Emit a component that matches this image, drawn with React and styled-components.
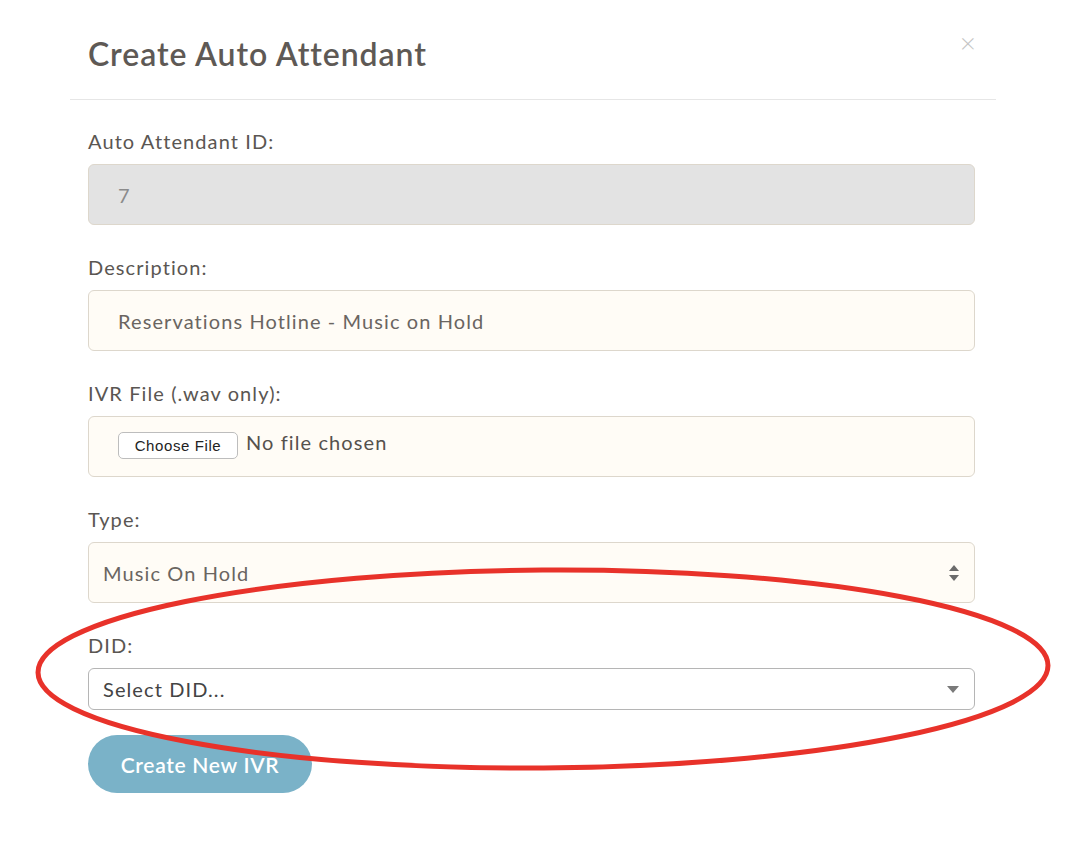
import React from "react";
import styled, { createGlobalStyle } from "styled-components";

const GlobalStyle = createGlobalStyle`
  html, body {
    margin: 0;
    padding: 0;
    background: #ffffff;
  }
  body {
    font-family: "Lato", "Open Sans", sans-serif;
  }
`;

const Page = styled.div`
  position: relative;
  width: 1080px;
  height: 862px;
  overflow: hidden;
  background: #fff;
`;

const Modal = styled.div`
  margin-left: 70px;
  width: 926px;
`;

const Header = styled.div`
  height: 100px;
  box-sizing: border-box;
  display: flex;
  align-items: center;
  justify-content: space-between;
  padding: 0 20px 0 18px;
  border-bottom: 1px solid #e6e6e6;
`;

const Title = styled.h2`
  margin: 8px 0 0;
  font-size: 32px;
  font-weight: 600;
  color: #5e5955;
  letter-spacing: 0.9px;
`;

const Close = styled.span`
  align-self: flex-start;
  margin-top: 28px;
  font-size: 28px;
  font-weight: 300;
  color: #c4c4c4;
  line-height: 1;
`;

const Body = styled.div`
  padding: 30px 21px 0 18px;
  display: flex;
  flex-direction: column;
`;

const Group = styled.div`
  display: flex;
  flex-direction: column;
  margin-bottom: ${(p) => p.gap || 31}px;
`;

const Label = styled.label`
  font-size: 20px;
  line-height: 22px;
  letter-spacing: 1.1px;
  color: #5a5652;
  margin-bottom: 12px;
`;

const Field = styled.div`
  box-sizing: border-box;
  height: ${(p) => p.h || 61}px;
  display: flex;
  align-items: center;
  padding-left: ${(p) => p.pl || 29}px;
  padding-right: 14px;
  border-radius: 6px;
  border: 1px solid ${(p) => (p.plain ? "#b5b5b5" : "#ddd7cc")};
  background: ${(p) =>
    p.disabled ? "#e3e3e3" : p.plain ? "#ffffff" : "#fffcf6"};
  font-size: 20px;
  letter-spacing: 1.1px;
  color: ${(p) => (p.disabled ? "#8b8b8b" : p.plain ? "#444" : "#6a6561")};
  justify-content: space-between;
`;

const FileRow = styled.div`
  display: flex;
  align-items: center;
  gap: 8px;
  margin-top: -10px;
`;

const FileButton = styled.span`
  box-sizing: border-box;
  height: 27px;
  width: 120px;
  display: flex;
  align-items: center;
  justify-content: center;
  border: 1px solid #bdbdbd;
  border-radius: 5px;
  background: #fff;
  font-family: "Liberation Sans", Arial, sans-serif;
  font-size: 15px;
  letter-spacing: 0.6px;
  color: #222;
  margin-top: 8px;
`;

const FileText = styled.span`
  font-size: 20px;
  letter-spacing: 1.1px;
  color: #55514d;
`;

const Submit = styled.button`
  align-self: flex-start;
  width: 224px;
  height: 58px;
  border: none;
  border-radius: 29px;
  background: #7ab2c8;
  color: #ffffff;
  font-family: "Lato", "Open Sans", sans-serif;
  font-size: 21px;
  font-weight: 600;
  letter-spacing: 0.7px;
`;

const Annotation = styled.svg`
  position: absolute;
  left: 0;
  top: 0;
  pointer-events: none;
`;

const UpDown = () => (
  <svg width="12" height="20" viewBox="0 0 12 20">
    <path d="M6 2 L11 8 L1 8 Z" fill="#6b6b6b" />
    <path d="M6 18 L11 12 L1 12 Z" fill="#6b6b6b" />
  </svg>
);

const Down = () => (
  <svg width="14" height="10" viewBox="0 0 14 10">
    <path d="M1 2 L13 2 L7 9 Z" fill="#7a7a7a" />
  </svg>
);

export default function App() {
  return (
    <Page>
      <GlobalStyle />
      <Modal>
        <Header>
          <Title>Create Auto Attendant</Title>
          <Close>×</Close>
        </Header>
        <Body>
          <Group>
            <Label>Auto Attendant ID:</Label>
            <Field disabled>7</Field>
          </Group>
          <Group>
            <Label>Description:</Label>
            <Field>Reservations Hotline - Music on Hold</Field>
          </Group>
          <Group>
            <Label>IVR File (.wav only):</Label>
            <Field>
              <FileRow>
                <FileButton>Choose File</FileButton>
                <FileText>No file chosen</FileText>
              </FileRow>
            </Field>
          </Group>
          <Group>
            <Label>Type:</Label>
            <Field pl={14}>
              <span>Music On Hold</span>
              <UpDown />
            </Field>
          </Group>
          <Group gap={25}>
            <Label>DID:</Label>
            <Field plain h={42} pl={14}>
              <span>Select DID...</span>
              <Down />
            </Field>
          </Group>
          <Submit>Create New IVR</Submit>
        </Body>
      </Modal>
      <Annotation width="1080" height="862" viewBox="0 0 1080 862">
        <ellipse
          cx="543"
          cy="669"
          rx="505"
          ry="99"
          fill="none"
          stroke="#e8322a"
          strokeWidth="5"
          transform="rotate(-0.4 543 669)"
        />
      </Annotation>
    </Page>
  );
}
